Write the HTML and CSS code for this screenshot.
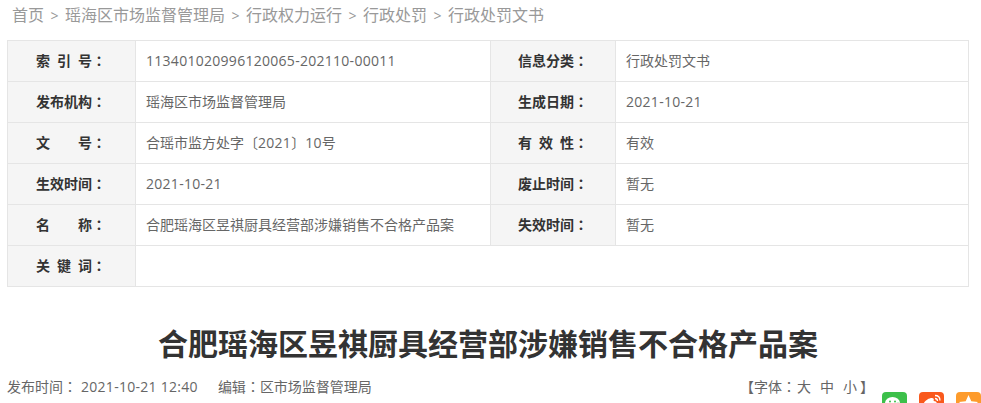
FILE: index.html
```html
<!DOCTYPE html>
<html lang="zh">
<head>
<meta charset="utf-8">
<title>合肥瑶海区昱祺厨具经营部涉嫌销售不合格产品案</title>
<link rel="stylesheet" href="styles.css">
</head>
<body>
<nav class="crumbs">
  <a>首页</a><span class="sep">&gt;</span><a>瑶海区市场监督管理局</a><span class="sep">&gt;</span><a>行政权力运行</a><span class="sep">&gt;</span><a>行政处罚</a><span class="sep">&gt;</span><a>行政处罚文书</a>
</nav>
<table class="info">
  <colgroup><col class="c1"><col class="c2"><col class="c3"><col class="c4"></colgroup>
  <tr><th>索&ensp;引&ensp;号<span class="colon">：</span></th><td><span class="num">113401020996120065-202110-00011</span></td><th>信息分类<span class="colon">：</span></th><td>行政处罚文书</td></tr>
  <tr><th>发布机构<span class="colon">：</span></th><td>瑶海区市场监督管理局</td><th>生成日期<span class="colon">：</span></th><td><span class="num">2021-10-21</span></td></tr>
  <tr><th>文&emsp;&emsp;号<span class="colon">：</span></th><td>合瑶市监方处字〔<span class="num">2021</span>〕<span class="num">10</span>号</td><th>有&ensp;效&ensp;性<span class="colon">：</span></th><td>有效</td></tr>
  <tr><th>生效时间<span class="colon">：</span></th><td><span class="num">2021-10-21</span></td><th>废止时间<span class="colon">：</span></th><td>暂无</td></tr>
  <tr><th>名&emsp;&emsp;称<span class="colon">：</span></th><td>合肥瑶海区昱祺厨具经营部涉嫌销售不合格产品案</td><th>失效时间<span class="colon">：</span></th><td>暂无</td></tr>
  <tr><th>关&ensp;键&ensp;词<span class="colon">：</span></th><td colspan="3"></td></tr>
</table>
<h1 class="title">合肥瑶海区昱祺厨具经营部涉嫌销售不合格产品案</h1>
<div class="meta">
  <div class="meta-left"><span class="date">发布时间<span class="colon">：</span><span class="num stamp">2021-10-21 12:40</span></span><span>编辑<span class="colon">：</span>区市场监督管理局</span></div>
  <div class="meta-right">
    <div class="font-size">【字体<span class="colon">：</span><span class="size first">大</span><span class="size">中</span><span class="size last">小</span>】</div>
    <div class="share">
      <svg class="ico wx" viewBox="0 0 25 25"><ellipse cx="10.500" cy="11" rx="7.500" ry="6" fill="#fff"/><ellipse cx="16" cy="16" rx="6" ry="4.800" fill="#fff" stroke="#3cc04a"/><circle cx="8" cy="9.500" r="1" fill="#3cc04a"/><circle cx="13" cy="9.500" r="1" fill="#3cc04a"/></svg>
      <svg class="ico wb" viewBox="0 0 25 25"><path d="M4 14c0-4 5-8 9-8 2 0 2 2 1.500 3 3 0 4 2 3 4-1 3-5 5-8 5-3 0-5.500-1.500-5.500-4z" fill="#fff"/><path d="M16 3.500c3 0 5 2 5 5M16 6.500c1.500 0 2.500 1 2.500 2.500" fill="none" stroke="#fff" stroke-width="1.300"/></svg>
      <svg class="ico qz" viewBox="0 0 25 25"><path d="M12.500 3l2.800 6.200 6.700.8-5 4.500 1.400 6.600-5.900-3.400-5.900 3.400 1.400-6.600-5-4.500 6.700-.8z" fill="#fff"/></svg>
    </div>
  </div>
</div>
```
FILE: styles.css
```css
html, body { margin: 0; padding: 0; height: 403px; overflow: hidden; background: #fff; }
body { font-family: "Noto Sans CJK SC", "Open Sans", sans-serif; font-size: 14px; color: #666; }
.num { font-family: "Open Sans", "Noto Sans CJK SC", sans-serif; letter-spacing: 0.28px; }
.colon { font-family: "Noto Sans CJK TC", sans-serif; font-feature-settings: "locl" 0; }
.crumbs { height: 28px; line-height: 28px; padding-left: 12px; font-size: 16px; color: #999; margin-bottom: 12px; }
.crumbs .sep { display: inline-block; width: 21px; text-align: center; font-size: 14px; font-family: "Open Sans", sans-serif; }
.info { border-collapse: collapse; table-layout: fixed; width: 962px; margin-left: 7px; }
.c1 { width: 128px; } .c2 { width: 355px; } .c3 { width: 125px; } .c4 { width: 353px; }
.info th, .info td { border: 1px solid #e5e5e5; height: 38px; padding: 0 0 2px; font-size: 14px; line-height: 20px; box-sizing: content-box; }
.info th { background: #f5f5f5; color: #333; text-align: left; padding-left: 28px; font-weight: bold; white-space: pre; }
.info th:nth-child(3) { padding-left: 27px; }
.info td { padding-left: 10px; color: #666; }
.title { margin: 33px 0 0; font-size: 30px; line-height: 44px; font-weight: bold; color: #333; text-align: center; padding-right: 5px; }
.meta { display: flex; justify-content: space-between; margin-top: 10px; padding-left: 7px; }
.meta-left { line-height: 24px; color: #666; }
.date { margin-right: 20px; }
.stamp { margin-left: 4px; }
.meta-right { width: 241px; }
.font-size { line-height: 24px; color: #666; white-space: nowrap; }
.size { margin-right: 9px; }
.size.first { margin-left: 1px; }
.size.last { margin-right: 3px; }
.share { display: flex; gap: 12px; margin-top: -6px; padding-left: 142px; }
.ico { width: 25px; height: 25px; border-radius: 4px; flex: none; }
.wx { background: #3cc04a; } .wb { background: #f9591c; } .qz { background: #fd9b2c; }
```
